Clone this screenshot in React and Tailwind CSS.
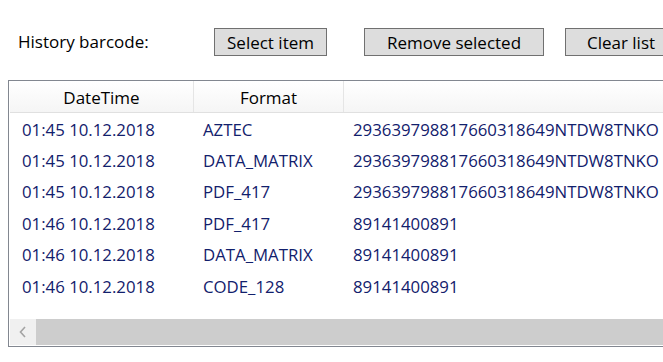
import React from 'react';

const ROWS = [
  ["01:45 10.12.2018", "AZTEC", "293639798817660318649NTDW8TNKO"],
  ["01:45 10.12.2018", "DATA_MATRIX", "293639798817660318649NTDW8TNKO"],
  ["01:45 10.12.2018", "PDF_417", "293639798817660318649NTDW8TNKO"],
  ["01:46 10.12.2018", "PDF_417", "89141400891"],
  ["01:46 10.12.2018", "DATA_MATRIX", "89141400891"],
  ["01:46 10.12.2018", "CODE_128", "89141400891"],
];

function Btn({ children, className }) {
  return (
    <button className={"h-[28px] border border-[#707070] bg-[#dddddd] text-[#000] leading-none flex items-center justify-center shrink-0 " + className}>
      {children}
    </button>
  );
}

export default function App() {
  return (
    <div className="w-[663px] h-[362px] overflow-hidden bg-white font-['Open_Sans',sans-serif] text-[17px] text-black">
      <div className="flex items-center pt-[28px]">
        <div className="w-[214px] pl-[18px] shrink-0">History barcode:</div>
        <Btn className="w-[113px]">Select item</Btn>
        <Btn className="w-[180px] ml-[37px]">Remove selected</Btn>
        <Btn className="w-[112px] ml-[21px]">Clear list</Btn>
      </div>

      <div className="mt-[24px] ml-[8px] w-[700px] h-[267px] border-l border-t border-b border-[#828790] flex flex-col">
        <div className="h-[32px] flex border-b border-[#e0e0e0] bg-gradient-to-b from-white to-[#f5f5f5] ml-[1px] shrink-0">
          <div className="w-[184px] border-r border-[#e5e5e5] flex items-center justify-center pt-[2px]">DateTime</div>
          <div className="w-[150px] border-r border-[#e5e5e5] flex items-center justify-center pt-[2px]">Format</div>
          <div className="flex-1"></div>
        </div>
        <div className="flex-1 ml-[1px] text-[#12206c] text-[16.8px]">
          {ROWS.map((r, i) => (
            <div key={i} className="h-[31.4px] flex items-center whitespace-nowrap pt-[1px]">
              <div className="w-[184px] pl-[12px]">{r[0]}</div>
              <div className="w-[150px] pl-[9px]">{r[1]}</div>
              <div className="pl-[9px]">{r[2]}</div>
            </div>
          ))}
        </div>
        <div className="h-[26px] mb-[1px] ml-[1px] flex shrink-0">
          <div className="w-[26px] bg-[#f0f0f0] flex items-center justify-center">
            <svg width="8" height="12" viewBox="0 0 8 12">
              <path d="M6 1 L1.5 6 L6 11" fill="none" stroke="#a3a3a3" strokeWidth="1.6" />
            </svg>
          </div>
          <div className="flex-1 bg-[#cdcdcd]"></div>
        </div>
      </div>
    </div>
  );
}
